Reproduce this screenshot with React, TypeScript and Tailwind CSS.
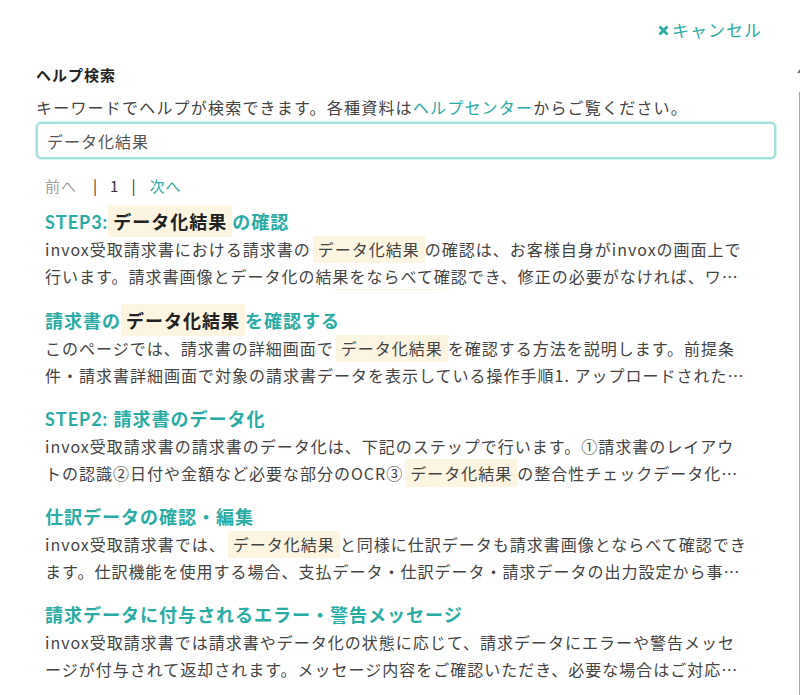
const font = "font-['Noto_Sans_CJK_JP','Lato',sans-serif]";

type Part = string | { hit: string };

interface Result {
    title: Part[];
    body: Part[];
}

const results: Result[] = [
    {
        title: ['STEP3:', { hit: 'データ化結果' }, 'の確認'],
        body: [
            'invox受取請求書における請求書の',
            { hit: 'データ化結果' },
            'の確認は、お客様自身がinvoxの画面上で行います。請求書画像とデータ化の結果をならべて確認でき、修正の必要がなければ、ワークフローに沿って承認します。なお、',
            { hit: 'データ化結果' },
            'に誤りがある場合は修正してください。',
        ],
    },
    {
        title: ['請求書の', { hit: 'データ化結果' }, 'を確認する'],
        body: [
            'このページでは、請求書の詳細画面で',
            { hit: 'データ化結果' },
            'を確認する方法を説明します。前提条件・請求書詳細画面で対象の請求書データを表示している操作手順1. アップロードされた請求書を選択します。',
        ],
    },
    {
        title: ['STEP2: 請求書のデータ化'],
        body: [
            'invox受取請求書の請求書のデータ化は、下記のステップで行います。①請求書のレイアウトの認識②日付や金額など必要な部分のOCR③',
            { hit: 'データ化結果' },
            'の整合性チェックデータ化の完了後に確認します。',
        ],
    },
    {
        title: ['仕訳データの確認・編集'],
        body: [
            'invox受取請求書では、',
            { hit: 'データ化結果' },
            'と同様に仕訳データも請求書画像とならべて確認できます。仕訳機能を使用する場合、支払データ・仕訳データ・請求データの出力設定から事前に設定してください。',
        ],
    },
    {
        title: ['請求データに付与されるエラー・警告メッセージ'],
        body: [
            'invox受取請求書では請求書やデータ化の状態に応じて、請求データにエラーや警告メッセージが付与されて返却されます。メッセージ内容をご確認いただき、必要な場合はご対応ください。',
        ],
    },
];

function Title({ parts }: { parts: Part[] }) {
    return (
        <div className="font-['Lato','Noto_Sans_CJK_JP',sans-serif] text-[18px] leading-[27px] tracking-[1px] font-bold text-[#2aaca4]">
            {parts.map((p, i) =>
                typeof p === 'string' ? (
                    <span key={i}>{p}</span>
                ) : (
                    <mark key={i} className={`${font} bg-[#fcf5e2] text-[#222222] px-[5px] py-[3px]`}>
                        {p.hit}
                    </mark>
                )
            )}
        </div>
    );
}

function Body({ parts }: { parts: Part[] }) {
    return (
        <p className="text-[16px] leading-[27px] tracking-[1px] text-[#444444] line-clamp-2">
            {parts.map((p, i) =>
                typeof p === 'string' ? (
                    <span key={i}>{p}</span>
                ) : (
                    <mark key={i} className="bg-[#fcf5e2] text-[#444444] px-[5px] py-[2px] ml-[2px]">
                        {p.hit}
                    </mark>
                )
            )}
        </p>
    );
}

export default function App() {
    return (
        <div className={`w-[800px] h-[695px] overflow-hidden bg-white flex flex-col ${font}`}>
            {/* header */}
            <div className="h-[62px] shrink-0 flex justify-end items-start pt-[16px] pr-[38px]">
                <button className="flex items-center gap-[3px] text-[#2aaca4] text-[17px] leading-[28px] tracking-[1px]">
                    <svg width="11" height="11" viewBox="0 0 11 11">
                        <path d="M1.5 1.5 L9.5 9.5 M9.5 1.5 L1.5 9.5" stroke="#2aaca4" strokeWidth="2.8" strokeLinecap="butt" />
                    </svg>
                    キャンセル
                </button>
            </div>

            <div className="flex flex-1 min-h-0">
                <div className="flex-1 flex flex-col pl-[36px] pr-[21px]">
                    <h2 className="text-[15px] leading-[26px] tracking-[1px] font-bold text-[#222222]">ヘルプ検索</h2>
                    <p className="mt-[6px] text-[16px] leading-[27px] tracking-[1.2px] text-[#444444]">
                        キーワードでヘルプが検索できます。各種資料は
                        <span className="text-[#2aaca4]">ヘルプセンター</span>
                        からご覧ください。
                    </p>
                    <div className="mt-[1px] h-[37px] rounded-[5px] border-2 border-[#a3e2dc] shadow-[0_0_0_1px_#d4f2ef] flex items-center px-[9px]">
                        <span className="text-[16px] tracking-[1px] text-[#555555]">データ化結果</span>
                    </div>

                    <div className="pl-[9px] pr-[26px] mt-[14px]">
                        <div className="flex items-center text-[15px] leading-[26px] tracking-[1px]">
                            <span className="text-[#a0a0a0]">前へ</span>
                            <span className="ml-[16px] text-[#333333]">|</span>
                            <span className="ml-[12px] text-[#333333]">1</span>
                            <span className="ml-[12px] text-[#333333]">|</span>
                            <span className="ml-[13px] text-[#2aaca4]">次へ</span>
                        </div>

                        <ul className="mt-[9px] flex flex-col gap-[17px]">
                            {results.map((r, i) => (
                                <li key={i}>
                                    <Title parts={r.title} />
                                    <Body parts={r.body} />
                                </li>
                            ))}
                        </ul>
                    </div>
                </div>

                {/* scrollbar edge */}
                <div className="w-[3px] shrink-0 flex flex-col items-end">
                    <svg width="3" height="8" viewBox="0 0 3 8" className="mt-[6px]">
                        <path d="M3 1 L0 5 L3 5 Z" fill="#777777" />
                    </svg>
                    <div className="mt-[16px] flex-1 w-[1px] bg-[#a8a8a8]" />
                </div>
            </div>
        </div>
    );
}
